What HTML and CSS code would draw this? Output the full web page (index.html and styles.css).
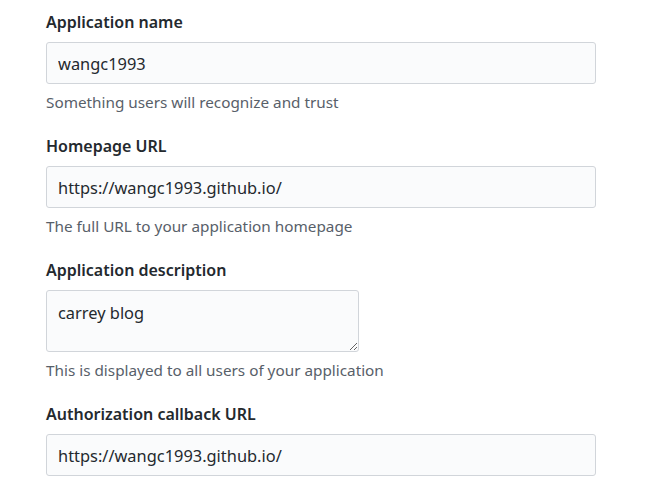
FILE: index.html
```html
<!DOCTYPE html>
<html>
<head>
<meta charset="utf-8">
<link rel="stylesheet" href="styles.css">
</head>
<body>
<form class="form">
  <div class="group">
    <label class="label">Application name</label>
    <input class="input" type="text" value="wangc1993">
    <p class="note">Something users will recognize and trust</p>
  </div>
  <div class="group">
    <label class="label">Homepage URL</label>
    <input class="input" type="text" value="https://wangc1993.github.io/">
    <p class="note">The full URL to your application homepage</p>
  </div>
  <div class="group">
    <label class="label">Application description</label>
    <textarea class="textarea">carrey blog</textarea>
    <p class="note">This is displayed to all users of your application</p>
  </div>
  <div class="group">
    <label class="label">Authorization callback URL</label>
    <input class="input" type="text" value="https://wangc1993.github.io/">
  </div>
</form>
</body>
</html>
```
FILE: styles.css
```css
html, body {
  margin: 0;
  padding: 0;
  background: #ffffff;
}
body {
  font-family: "Noto Sans", "Open Sans", sans-serif;
  color: #24292e;
}
.form {
  padding: 12px 0 0 46px;
  width: 550px;
}
.group {
  display: flex;
  flex-direction: column;
  align-items: flex-start;
  margin-bottom: 24px;
}
.label {
  display: block;
  font-size: 16px;
  font-weight: 600;
  line-height: 20px;
  margin-bottom: 10px;
}
.input, .textarea {
  box-sizing: border-box;
  font-family: inherit;
  font-size: 16.4px;
  color: #24292e;
  background: #fafbfc;
  border: 1px solid #d1d5da;
  border-radius: 3px;
  padding: 0 11px;
  margin: 0;
  outline: none;
}
.input {
  width: 550px;
  height: 42px;
  line-height: 20px;
}
.textarea {
  width: 313px;
  height: 62px;
  padding: 12px 11px 8px;
  line-height: 20px;
  resize: both;
}
.note {
  margin: 8px 0 0;
  font-size: 15.3px;
  line-height: 20px;
  color: #586069;
}
```
